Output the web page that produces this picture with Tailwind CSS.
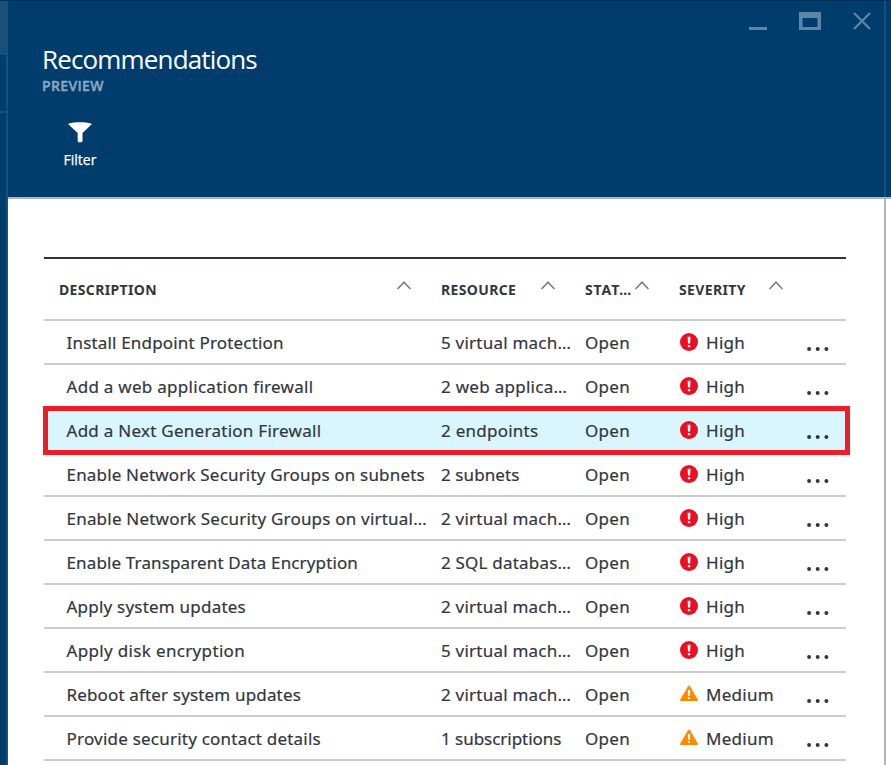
<!DOCTYPE html>
<html lang="en">
<head>
<meta charset="utf-8">
<title>Recommendations</title>
<script src="https://cdn.jsdelivr.net/npm/@tailwindcss/browser@4"></script>
</head>
<body class="w-[891px] h-[765px] overflow-hidden bg-[#003c6c] font-['Noto_Sans','Open_Sans',sans-serif] text-[#32363e]">
<div class="flex h-[765px] border-t border-[#00305a]">
  <aside class="w-2 shrink-0 border-r-2 border-[#1a4f7c]">
    <div class="h-[54px] bg-[#1a4f7c]"></div>
    <div class="h-[58px] border-b-2 border-[#1a4f7c]"></div>
  </aside>
  <main class="w-[876px] shrink-0 flex flex-col">
    <header class="h-[198px] shrink-0 border-b-2 border-[#b3b3b3] relative text-white pl-[34px]">
      <div class="absolute top-0 right-0 text-[#5c85a8]">
        <svg class="block" width="144" height="40" viewBox="740 1 144 40" fill="none" stroke="currentColor"><path d="M749 28.5h18" stroke-width="3"/><path d="M799 12h22v18h-22zM802.500 18v9h15v-9z" fill="currentColor" fill-rule="evenodd" stroke="none"/><path d="M854 13l16 16M870 13l-16 16" stroke-width="2.3"/></svg>
      </div>
      <h1 class="pt-[43px] text-[26px] leading-[30px] whitespace-nowrap font-['Open_Sans'] font-normal tracking-[-0.85px]"><span>Recommendations</span></h1>
      <p class="mt-[5px] text-[14px] leading-[14px] text-[#8aa7c0] font-['Open_Sans'] font-semibold tracking-[0.35px] [-webkit-text-stroke:0.4px]"><span>PREVIEW</span></p>
      <div class="mt-[28px] ml-[8px] w-[60px] flex flex-col items-center">
        <svg width="24" height="22" viewBox="0 0 24 22" fill="#fff"><path d="M0 3C3 .6 21 .6 24 3L14.500 12V20.500Q12 22.300 9.700 20.500V12Z"/></svg>
        <span class="mt-[7px] text-[14px] leading-[20px] font-['Open_Sans'] font-medium [-webkit-text-stroke:0.25px]">Filter</span>
      </div>
    </header>
    <section class="grow bg-white pt-[58px] pl-[36px]">
      <div class="w-[802px] border-t-2 border-[#2e343b]">
        <div id="head" class="h-[62px] border-b-2 border-[#cccccc] grid grid-cols-[397px_144px_94px_167px] text-[14px] font-bold leading-[61px] tracking-[0.35px]"></div>
        <div id="rows"></div>
      </div>
    </section>
  </main>
  <div class="w-[7px] shrink-0 flex flex-col">
    <div class="h-[196px] border-l-2 border-[#1a4f7c]"></div>
    <div class="grow bg-white border-t-2 border-l-2 border-[#b3b3b3]"></div>
  </div>
</div>
<script>
const caret='<svg width="14" height="9" viewBox="0 0 14 9" fill="none" stroke="#777b80" stroke-width="1.500"><path d="M.6 8L7 1.200 13.400 8"/></svg>';
document.getElementById('head').innerHTML=[['DESCRIPTION','pl-[15px]','left-[353px]'],['RESOURCE','','left-[100px]'],['STAT…','tracking-[0.9px]','left-[50px]'],['SEVERITY','','left-[90px]']]
 .map(([t,p,l])=>`<div class="relative ${p}"><span>${t}</span><i class="absolute top-[22px] ${l}">${caret}</i></div>`).join('');
const hi='<svg width="18" height="18" viewBox="0 0 18 18"><circle cx="9" cy="9" r="9" fill="#e81123"/><path d="M7.600 3.700h2.900L10.100 10.600H8z" fill="#fff"/><rect x="7.800" y="12" width="2.500" height="2.300" rx=".7" fill="#fff"/></svg>';
const med='<svg width="18" height="18" viewBox="0 0 18 18"><path d="M8 1.300Q9-.2 10 1.300L17.800 14.500Q18.300 16 17 16H1Q-.3 16 .2 14.500Z" fill="#ff8c00"/><path d="M7.900 5h2.300L9.900 11H8.200z" fill="#fff"/><rect x="8" y="12" width="2" height="2" fill="#fff"/></svg>';
const rows=[
['Install Endpoint Protection','5 virtual mach…',1,'tracking-[0.18px]','tracking-[0.23px]'],
['Add a web application firewall','2 web applica…',1,'tracking-[0.28px]','tracking-[0.28px]'],
['Add a Next Generation Firewall','2 endpoints',1,'tracking-[0.27px]','tracking-[0.25px]'],
['Enable Network Security Groups on subnets','2 subnets',1,'tracking-[0.18px]','tracking-[0.1px]'],
['Enable Network Security Groups on virtual…','2 virtual mach…',1,'tracking-[0.21px]','tracking-[0.23px]'],
['Enable Transparent Data Encryption','2 SQL databas…',1,'tracking-[0.14px]','tracking-[0.2px]'],
['Apply system updates','2 virtual mach…',1,'tracking-[0.22px]','tracking-[0.23px]'],
['Apply disk encryption','5 virtual mach…',1,'tracking-[0.34px]','tracking-[0.23px]'],
['Reboot after system updates','2 virtual mach…',0,'tracking-[0.16px]','tracking-[0.23px]'],
['Provide security contact details','1 subscriptions',0,'tracking-[0.22px]','tracking-[-0.03px]']];
document.getElementById('rows').innerHTML=rows.map(([a,b,h,ta,tb],i)=>`<div class="relative h-[44px] border-b-2 border-[#cccccc] grid grid-cols-[397px_144px_94px_167px] text-[17px] leading-[43px] whitespace-nowrap [-webkit-text-stroke:0.2px] ${i==2?'bg-[#d9f5fe]':''}">
<div class="pl-[22.5px] ${ta}"><span>${a}</span></div><div class="${tb}"><span>${b}</span></div><div class="tracking-[0.3px]"><span>Open</span></div>
<div class="flex tracking-[0.3px]"><i class="mt-[12px] ml-px w-[26px]">${h?hi:med}</i><span>${h?'High':'Medium'}</span><svg class="absolute left-[763px] top-[25px]" width="22" height="6" viewBox="0 0 22 6" fill="#32363e"><circle cx="2.100" cy="3" r="2"/><circle cx="10.700" cy="3" r="2"/><circle cx="19.400" cy="3" r="2"/></svg></div>
${i==2?'<div class="absolute -left-px -top-[3px] w-[807px] h-[49px] border-[5px] border-[#ee1c25] z-10"></div>':''}</div>`).join('');
</script>
</body>
</html>
